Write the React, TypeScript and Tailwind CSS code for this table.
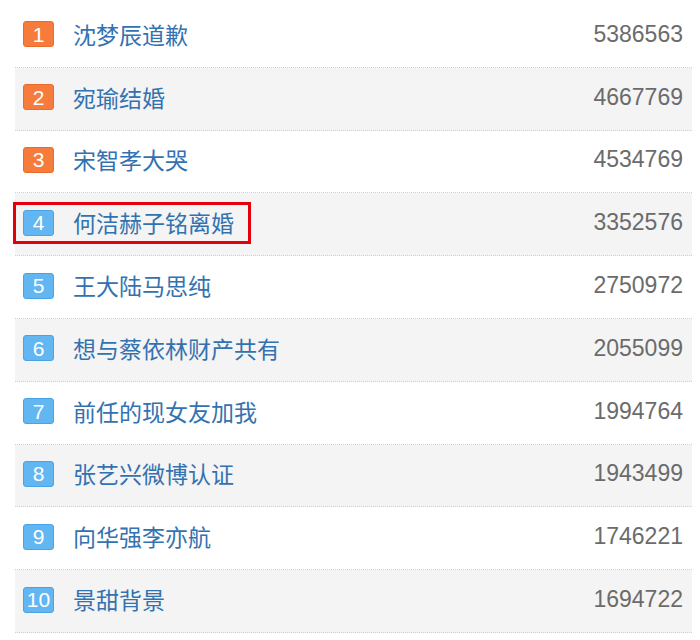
import React from "react";

const items = [
  { t: "沈梦辰道歉", n: "5386563" },
  { t: "宛瑜结婚", n: "4667769" },
  { t: "宋智孝大哭", n: "4534769" },
  { t: "何洁赫子铭离婚", n: "3352576" },
  { t: "王大陆马思纯", n: "2750972" },
  { t: "想与蔡依林财产共有", n: "2055099" },
  { t: "前任的现女友加我", n: "1994764" },
  { t: "张艺兴微博认证", n: "1943499" },
  { t: "向华强李亦航", n: "1746221" },
  { t: "景甜背景", n: "1694722" },
];

export default function App() {
  return (
    <div className="w-[700px] h-[640px] bg-white pt-[5px] pl-[15px] pr-[8px]">
      {items.map((it, i) => {
        const top = i < 3;
        return (
          <div
            key={i}
            className={`relative flex items-center h-[62.8px] border-b border-dotted border-[#cfcfcf] pl-[8px] pr-[9px] ${
              i % 2 === 1 ? "bg-[#f4f4f4]" : "bg-white"
            }`}
          >
            <div
              className={`w-[31px] h-[26px] mt-[-3px] rounded-[3px] flex items-center justify-center text-white text-[21px] leading-none border ${
                top
                  ? "bg-[#f77b3b] border-[#e86c2c]"
                  : "bg-[#62b6f2] border-[#4aa3e4]"
              }`}
              style={{ fontFamily: '"Liberation Sans", Arial, sans-serif' }}
            >
              {i + 1}
            </div>
            <div
              className="ml-[19px] text-[23px] leading-none text-[#3372b0] mt-[-3px]"
              style={{ fontFamily: '"Noto Sans CJK SC", "Noto Sans", sans-serif' }}
            >
              {it.t}
            </div>
            <div
              className="ml-auto text-[23px] leading-none text-[#6b6b6b] mt-[-3px]"
              style={{ fontFamily: '"Liberation Sans", Arial, sans-serif' }}
            >
              {it.n}
            </div>
            {i === 3 && (
              <div className="absolute left-[-2px] top-[9px] w-[238px] h-[42px] border-[3px] border-[#e3000b]" />
            )}
          </div>
        );
      })}
    </div>
  );
}
